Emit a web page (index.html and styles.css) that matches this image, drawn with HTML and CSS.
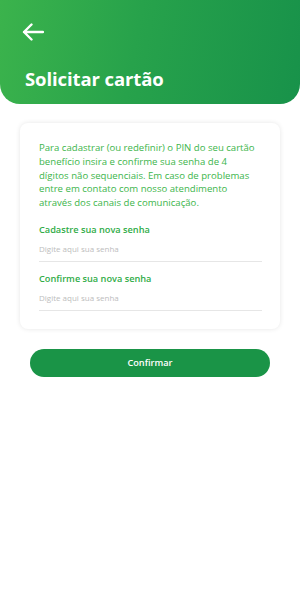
FILE: index.html
```html
<!DOCTYPE html>
<html>
<head>
    <title>Solicitar cartão</title>
    <link rel="stylesheet" href="styles.css">
</head>
<body>
    <div class="header">
        <a class="back" href="#">
            <svg width="22" height="18" viewBox="0 0 22 18">
                <path d="M21 9H2M9.5 1.5L2 9l7.5 7.5" fill="none" stroke="#fff" stroke-width="2.4" stroke-linecap="round" stroke-linejoin="round"/>
            </svg>
        </a>
        <h1>Solicitar cartão</h1>
    </div>

    <div class="card">
        <p class="info">Para cadastrar (ou redefinir) o PIN do seu cartão<br>
            benefício insira e confirme sua senha de 4<br>
            dígitos não sequenciais. Em caso de problemas<br>
            entre em contato com nosso atendimento<br>
            através dos canais de comunicação.</p>

        <div class="field">
            <label for="senha1">Cadastre sua nova senha</label>
            <input id="senha1" type="password" placeholder="Digite aqui sua senha">
        </div>
        <div class="field">
            <label for="senha2">Confirme sua nova senha</label>
            <input id="senha2" type="password" placeholder="Digite aqui sua senha">
        </div>
    </div>

    <button class="confirm" type="button">Confirmar</button>
</body>
</html>
```

FILE: styles.css
```css
body {
    font-family: "Open Sans", "Liberation Sans", sans-serif;
    margin: 0;
    padding: 0;
    background-color: #fff;
    width: 300px;
}
.header {
    height: 104px;
    box-sizing: border-box;
    padding: 23px 25px 0;
    background: linear-gradient(100deg, #3bb34c 0%, #27a24b 45%, #18924a 100%);
    border-radius: 0 0 20px 20px;
}
.back {
    display: block;
    width: 22px;
    height: 18px;
    margin-left: -3px;
}
.back svg {
    display: block;
}
.header h1 {
    margin: 25px 0 0;
    color: #fff;
    font-size: 18.5px;
    font-weight: 700;
    line-height: 26px;
    letter-spacing: -0.1px;
}
.card {
    margin: 19px 20px 0 20px;
    padding: 18px 18px 18px 19px;
    background-color: #fff;
    border-radius: 8px;
    box-shadow: 0 0 5px rgba(0, 0, 0, 0.1);
}
.info {
    margin: 0 0 6px;
    color: #3cb54b;
    font-size: 9.6px;
    line-height: 13.8px;
    white-space: nowrap;
}
.field {
    padding-top: 6px;
}
.field + .field {
    padding-top: 9px;
}
.field label {
    display: block;
    color: #30ac47;
    font-size: 9.2px;
    font-weight: 600;
    line-height: 15px;
}
.field input {
    display: block;
    width: 100%;
    box-sizing: border-box;
    border: none;
    border-bottom: 1px solid #e6e6e6;
    padding: 6px 0 7px;
    font-family: inherit;
    font-size: 8px;
    outline: none;
}
.field input::placeholder {
    color: #bdbdbd;
}
.confirm {
    display: block;
    width: 240px;
    height: 28px;
    margin: 20px auto 0;
    border: none;
    border-radius: 14px;
    background-color: #1a9447;
    color: #fff;
    font-family: inherit;
    font-size: 9.2px;
    font-weight: 600;
}
```
